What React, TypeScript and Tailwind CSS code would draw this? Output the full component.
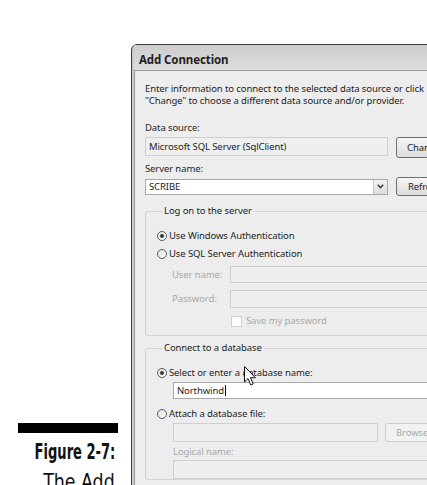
import React from "react";

const ui = "font-['Noto_Sans',sans-serif] text-[9.5px] leading-[12px] tracking-[-0.1px]";

function Radio({ checked, disabled }: { checked?: boolean; disabled?: boolean }) {
  return (
    <span
      className={`relative inline-flex h-[10px] w-[10px] shrink-0 items-center justify-center rounded-full border ${
        disabled ? "border-[#b5b5b5]" : "border-[#5a5a5a]"
      } bg-gradient-to-br from-[#e2e2e2] to-[#ffffff]`}
    >
      {checked && <span className="h-[4px] w-[4px] rounded-full bg-[#3a3a3a]" />}
    </span>
  );
}

function Box({
  className = "",
  enabled,
  children,
}: {
  className?: string;
  enabled?: boolean;
  children?: React.ReactNode;
}) {
  return (
    <div
      className={`flex shrink-0 items-center border px-[3px] ${
        enabled ? "border-[#a8a8a8] bg-white" : "border-[#cfcfcf] bg-[#efefef]"
      } ${className}`}
    >
      {children}
    </div>
  );
}

function Button({ label, disabled, className = "" }: { label: string; disabled?: boolean; className?: string }) {
  return (
    <div
      className={`flex shrink-0 items-center rounded-[3px] border ${
        disabled
          ? "border-[#cfcfcf] bg-[#f2f2f2] text-[#a9a9a9]"
          : "border-[#6f6f6f] bg-gradient-to-b from-[#f6f6f6] to-[#dcdcdc] text-[#1e1e1e]"
      } ${className}`}
    >
      {label}
    </div>
  );
}

function Pointer() {
  return (
    <svg className="absolute left-[244px] top-[366px]" width="13" height="21" viewBox="0 0 13 21">
      <path
        d="M0.5 0.5 L0.5 16 L4 12.6 L6.8 19 L9.2 17.9 L6.5 11.7 L11.4 11.7 Z"
        fill="#ffffff"
        stroke="#111111"
        strokeWidth="1"
        strokeLinejoin="round"
      />
    </svg>
  );
}

export default function App() {
  return (
    <div className="relative flex h-[485px] w-[427px] overflow-hidden bg-white">
      {/* caption column */}
      <div className="w-[131px] shrink-0 pt-[423px]">
        <div className="ml-[18px] h-[10px] w-[100px] bg-black" />
        <div className="mt-[6px] flex flex-col items-end whitespace-nowrap pr-[16px] font-['DejaVu_Sans_Condensed','DejaVu_Sans',sans-serif] text-[#111]">
          <div className="w-max origin-right scale-x-[0.66] text-[22px] font-bold leading-[26px]">Figure 2-7:</div>
          <div className="mt-[4px] w-max origin-right scale-x-[0.92] text-[21px] leading-[26px]">The Add</div>
        </div>
      </div>

      {/* dialog window */}
      <div className={`${ui} mt-[44px] h-[470px] w-[360px] shrink-0 rounded-tl-[6px] border border-[#3d3d3d] bg-[#cbcbcb] pl-[2px] text-[#1e1e1e]`}>
        <div className="flex h-[25px] items-center bg-gradient-to-b from-[#cdcdcd] to-[#dedede] pl-[5px] pt-[5px] text-[11.5px] font-bold text-[#222]">
          Add Connection
        </div>
        <div className="h-[460px] border border-[#9a9a9a] bg-[#ededed] pl-[10px] pt-[12px]">
          <div className="whitespace-nowrap">
            Enter information to connect to the selected data source or click
            <br />
            "Change" to choose a different data source and/or provider.
          </div>

          <div className="mt-[15px]">Data source:</div>
          <div className="mt-[3px] flex gap-[8px]">
            <Box className="h-[19px] w-[243px]">Microsoft SQL Server (SqlClient)</Box>
            <Button label="Change..." className="h-[21px] w-[75px] pl-[10px]" />
          </div>

          <div className="mt-[5px]">Server name:</div>
          <div className="mt-[2px] flex items-center gap-[8px]">
            <div className="flex h-[16px] w-[243px] shrink-0 border border-[#a8a8a8] bg-white">
              <div className="flex flex-1 items-center pl-[3px]">SCRIBE</div>
              <div className="flex w-[14px] items-center justify-center border-l border-[#c8c8c8] bg-gradient-to-b from-[#f4f4f4] to-[#dcdcdc]">
                <svg width="7" height="5" viewBox="0 0 7 5">
                  <path d="M0.8 0.8 L3.5 3.8 L6.2 0.8" fill="none" stroke="#333" strokeWidth="1.4" />
                </svg>
              </div>
            </div>
            <Button label="Refresh" className="h-[19px] w-[75px] pl-[11px]" />
          </div>

          {/* Log on to the server */}
          <fieldset className="mt-[9px] rounded-[3px] border border-[#d2d2d2] pb-[8px] pl-[11px]">
            <legend className="ml-[5px] px-[2px]">Log on to the server</legend>
            <div className="mt-[13px] flex items-center gap-[2px]">
              <Radio checked />
              <span>Use Windows Authentication</span>
            </div>
            <div className="mt-[6px] flex items-center gap-[2px]">
              <Radio />
              <span>Use SQL Server Authentication</span>
            </div>
            <div className="mt-[6px] flex items-center text-[#a9a9a9]">
              <span className="w-[73px] shrink-0 pl-[15px]">User name:</span>
              <Box className="h-[17px] w-[220px]" />
            </div>
            <div className="mt-[7px] flex items-center text-[#a9a9a9]">
              <span className="w-[73px] shrink-0 pl-[15px]">Password:</span>
              <Box className="h-[18px] w-[220px]" />
            </div>
            <div className="mt-[7px] flex items-center gap-[4px] pl-[74px] text-[#a9a9a9]">
              <span className="h-[11px] w-[11px] border border-[#cfcfcf] bg-white" />
              <span>Save my password</span>
            </div>
          </fieldset>

          {/* Connect to a database */}
          <fieldset className="mt-[6px] rounded-[3px] border border-[#d2d2d2] pl-[11px]">
            <legend className="ml-[5px] px-[2px]">Connect to a database</legend>
            <div className="mt-[13px] flex items-center gap-[2px]">
              <Radio checked />
              <span>Select or enter a database name:</span>
            </div>
            <div className="ml-[16px] mt-[3px]">
              <Box enabled className="h-[17px] w-[260px]">
                <span>Northwind</span>
                <span className="ml-[1px] h-[11px] w-px bg-black" />
              </Box>
            </div>
            <div className="mt-[9px] flex items-center gap-[2px]">
              <Radio />
              <span>Attach a database file:</span>
            </div>
            <div className="ml-[16px] mt-[3px] flex gap-[7px]">
              <Box className="h-[19px] w-[205px]" />
              <Button label="Browse..." disabled className="h-[19px] w-[75px] pl-[10px]" />
            </div>
            <div className="ml-[16px] mt-[4px] text-[#a9a9a9]">Logical name:</div>
            <div className="ml-[16px] mt-[2px]">
              <Box className="h-[19px] w-[260px]" />
            </div>
          </fieldset>
        </div>
      </div>

      <Pointer />
    </div>
  );
}
